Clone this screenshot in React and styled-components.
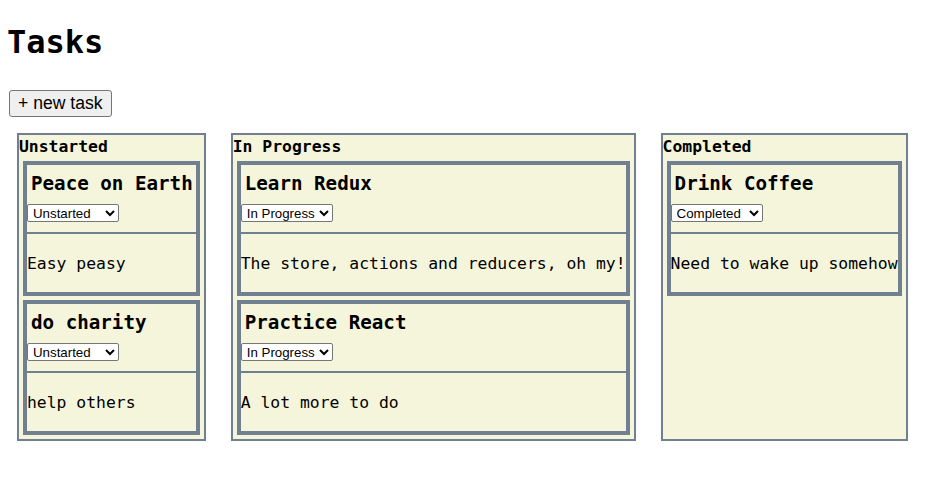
import React, { useState } from "react";
import styled, { createGlobalStyle } from "styled-components";

const Global = createGlobalStyle`
  html, body { margin: 0; padding: 0; background: #ffffff; }
  body { font-family: "DejaVu Sans Mono", "Liberation Mono", monospace; color: #000; }
`;

const Page = styled.div`
  padding: 23px 8px 0 8px;
`;

const Title = styled.h1`
  margin: 0 0 0 -1px;
  font-size: 32px;
  line-height: 38px;
  font-weight: bold;
  font-family: "DejaVu Sans Mono", monospace;
`;

const NewTaskButton = styled.button`
  display: block;
  margin: 29px 0 0 1px;
  height: 27px;
  padding: 0 8px;
  font-family: "Liberation Sans", Arial, sans-serif;
  font-size: 17.6px;
  line-height: 25px;
  color: #000;
  background: #efefef;
  border: 1px solid #767676;
  border-radius: 3px;
  cursor: pointer;
`;

const Board = styled.div`
  display: flex;
  align-items: stretch;
  gap: 25px;
  margin: 16px 0 0 9px;
`;

const Column = styled.section`
  flex: none;
  display: flex;
  flex-direction: column;
  border: 2px solid #708090;
  background: #f5f5dc;
`;

const ColumnTitle = styled.div`
  padding-top: 1px;
  font-size: 16.4px;
  line-height: 21px;
  font-weight: bold;
`;

const CardList = styled.div`
  display: flex;
  flex-direction: column;
  gap: 4px;
  padding: 4px;
`;

const Card = styled.article`
  border: 4px solid #708090;
  background: #f5f5dc;
`;

const CardHeader = styled.div`
  padding: 7px 0 10px 0;
  border-bottom: 2px solid #708090;
`;

const CardTitle = styled.h3`
  margin: 0 0 8px 0;
  padding: 0 3px 0 4px;
  font-size: 19.2px;
  line-height: 24px;
  font-weight: bold;
  white-space: nowrap;
`;

const StatusSelect = styled.select`
  display: block;
  width: 92px;
  height: 18px;
  margin: 0;
  padding: 0 0 0 1px;
  font-family: "Liberation Sans", Arial, sans-serif;
  font-size: 13.3px;
  color: #000;
  background: #fff;
  border: 1px solid #767676;
  border-radius: 2px;
`;

const Description = styled.p`
  margin: 0;
  padding: 20px 0 18px 0;
  font-size: 16.4px;
  line-height: 20px;
  white-space: nowrap;
`;

const STATUSES = ["Unstarted", "In Progress", "Completed"];

const initialTasks = [
  { id: 1, title: "Peace on Earth", description: "Easy peasy", status: "Unstarted" },
  { id: 2, title: "do charity", description: "help others", status: "Unstarted" },
  { id: 3, title: "Learn Redux", description: "The store, actions and reducers, oh my!", status: "In Progress" },
  { id: 4, title: "Practice React", description: "A lot more to do", status: "In Progress" },
  { id: 5, title: "Drink Coffee", description: "Need to wake up somehow", status: "Completed" },
];

function TaskCard({ task, onStatus }) {
  return (
    <Card>
      <CardHeader>
        <CardTitle>{task.title}</CardTitle>
        <StatusSelect value={task.status} onChange={(e) => onStatus(task.id, e.target.value)}>
          {STATUSES.map((s) => (
            <option key={s} value={s}>{s}</option>
          ))}
        </StatusSelect>
      </CardHeader>
      <Description>{task.description}</Description>
    </Card>
  );
}

export default function App() {
  const [tasks, setTasks] = useState(initialTasks);
  const setStatus = (id, status) =>
    setTasks((ts) => ts.map((t) => (t.id === id ? { ...t, status } : t)));
  const addTask = () =>
    setTasks((ts) => [
      ...ts,
      { id: Date.now(), title: "New task", description: "Describe it", status: "Unstarted" },
    ]);

  return (
    <>
      <Global />
      <Page>
        <Title>Tasks</Title>
        <NewTaskButton onClick={addTask}>+ new task</NewTaskButton>
        <Board>
          {STATUSES.map((status) => (
            <Column key={status}>
              <ColumnTitle>{status}</ColumnTitle>
              <CardList>
                {tasks
                  .filter((t) => t.status === status)
                  .map((t) => (
                    <TaskCard key={t.id} task={t} onStatus={setStatus} />
                  ))}
              </CardList>
            </Column>
          ))}
        </Board>
      </Page>
    </>
  );
}
